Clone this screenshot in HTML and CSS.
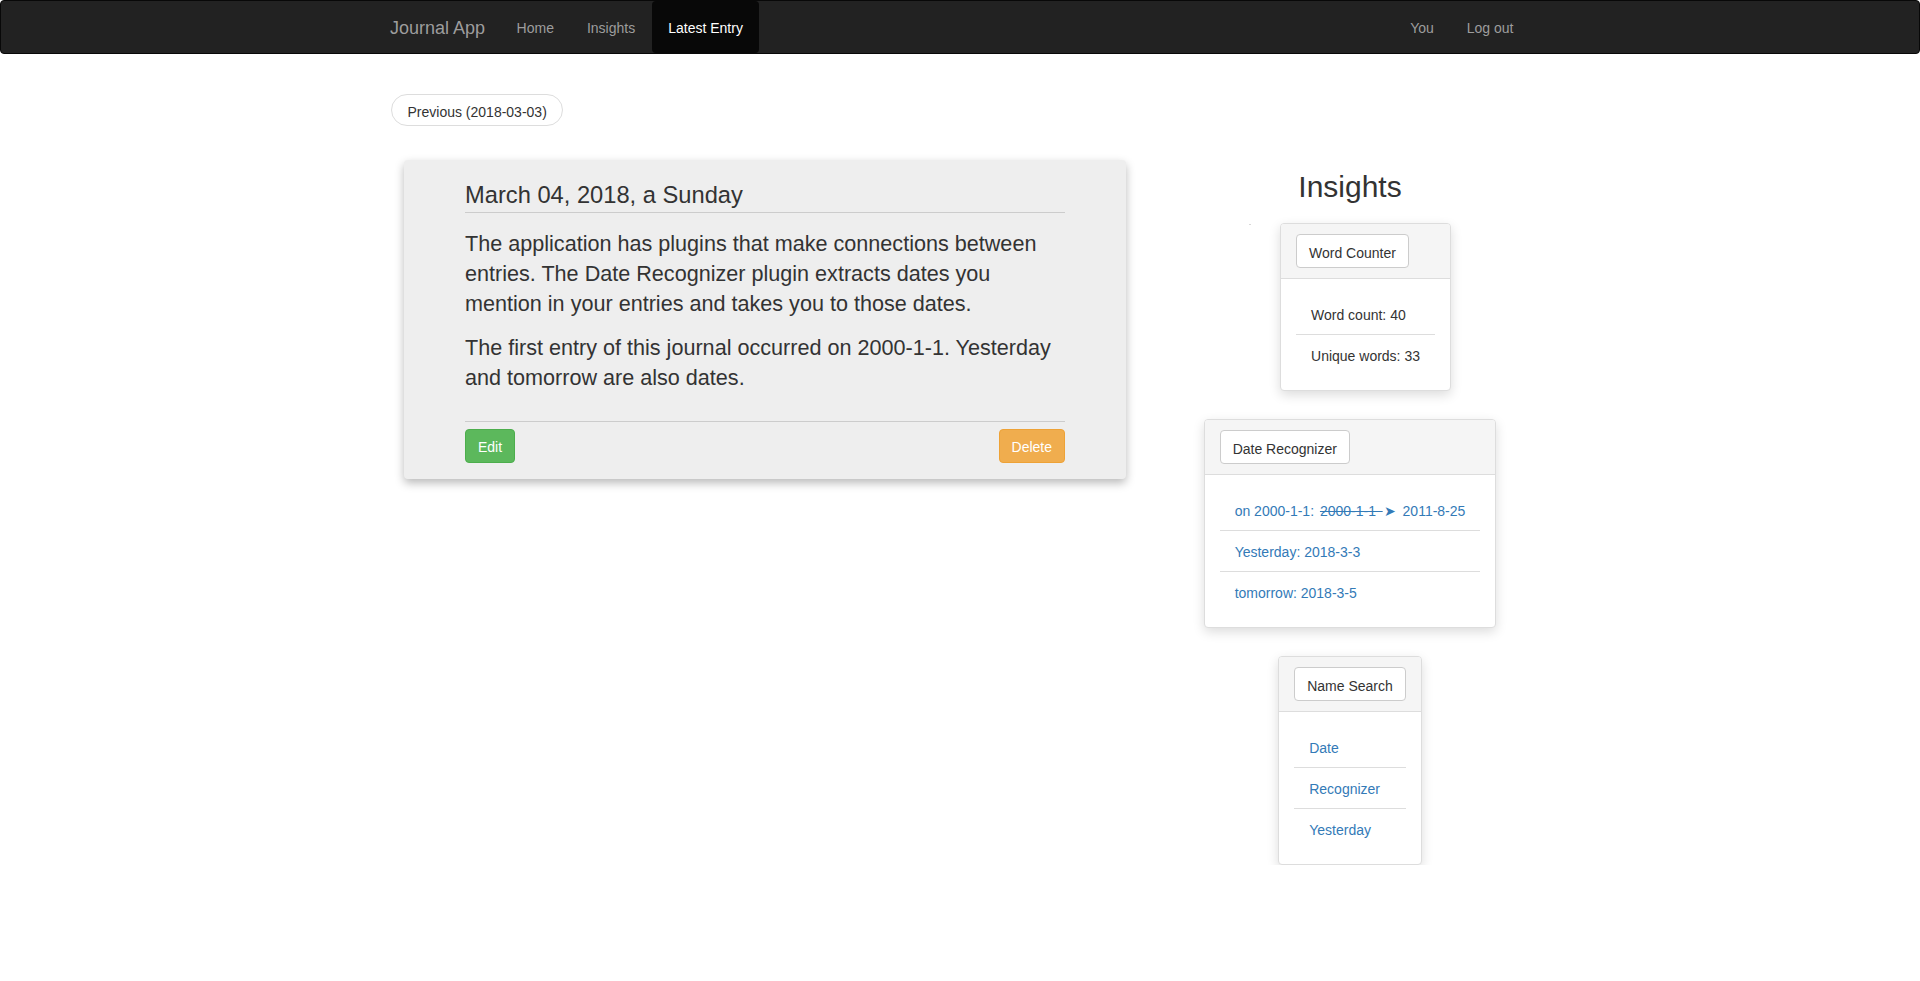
FILE: index.html
```html
<!DOCTYPE html>
<html lang="en">
<head>
<meta charset="utf-8">
<title>Journal App</title>
<link rel="stylesheet" href="styles.css">
</head>
<body>
<nav class="navbar">
  <div class="nav-inner">
    <a class="brand" href="#">Journal App</a>
    <a class="nav-link" href="#">Home</a>
    <a class="nav-link" href="#">Insights</a>
    <a class="nav-link active" href="#">Latest Entry</a>
    <div class="nav-right">
      <a class="nav-link" href="#">You</a>
      <a class="nav-link" href="#">Log out</a>
    </div>
  </div>
</nav>

<main class="container">
  <div class="pager"><a class="pager-btn" href="#">Previous (2018-03-03)</a></div>

  <div class="row">
    <section class="entry-col">
      <article class="entry-card">
        <h3 class="entry-title">March 04, 2018, a Sunday</h3>
        <p class="entry-text">The application has plugins that make connections between entries. The Date Recognizer plugin extracts dates you mention in your entries and takes you to those dates.</p>
        <p class="entry-text">The first entry of this journal occurred on 2000-1-1. Yesterday and tomorrow are also dates.</p>
        <div class="entry-footer">
          <a class="btn btn-card btn-success" href="#">Edit</a>
          <a class="btn btn-card btn-warning" href="#">Delete</a>
        </div>
      </article>
    </section>

    <aside class="insights-col">
      <h2 class="insights-title">Insights</h2>
      <div class="panels">
        <div class="panel-row">
          <span class="dot"></span>
          <div class="panel">
            <div class="panel-heading"><button class="btn btn-default">Word Counter</button></div>
            <div class="panel-body">
              <ul class="list">
                <li class="list-item">Word count: 40</li>
                <li class="list-item">Unique words: 33</li>
              </ul>
            </div>
          </div>
        </div>

        <div class="panel">
          <div class="panel-heading"><button class="btn btn-default">Date Recognizer</button></div>
          <div class="panel-body">
            <ul class="list">
              <li class="list-item"><a class="link" href="#">on 2000-1-1: <s class="old-date">2000-1-1&#8201; </s><span class="arrow">&#10148;</span> 2011-8-25</a></li>
              <li class="list-item"><a class="link" href="#">Yesterday: 2018-3-3</a></li>
              <li class="list-item"><a class="link" href="#">tomorrow: 2018-3-5</a></li>
            </ul>
          </div>
        </div>

        <div class="panel">
          <div class="panel-heading"><button class="btn btn-default">Name Search</button></div>
          <div class="panel-body">
            <ul class="list">
              <li class="list-item"><a class="link" href="#">Date</a></li>
              <li class="list-item"><a class="link" href="#">Recognizer</a></li>
              <li class="list-item"><a class="link" href="#">Yesterday</a></li>
            </ul>
          </div>
        </div>
      </div>
    </aside>
  </div>
</main>
</body>
</html>
```

FILE: styles.css
```css
* { box-sizing: border-box; }

html, body {
  margin: 0;
  padding: 0;
  background: #fff;
}

body {
  font-family: "Liberation Sans", Arial, Helvetica, sans-serif;
  font-size: 14px;
  line-height: 20px;
  color: #333;
}

a { text-decoration: none; }

/* Navbar */
.navbar {
  height: 54px;
  background: #222;
  border: 1px solid #080808;
  border-radius: 4px;
}

.nav-inner {
  width: 1170px;
  margin: 0 auto;
  display: flex;
  align-items: stretch;
  height: 52px;
}

.brand {
  font-size: 18px;
  line-height: 20px;
  padding: 17px 15px 15px;
  color: #9d9d9d;
}

.nav-link {
  padding: 17px 16.5px 15px;
  line-height: 20px;
  color: #9d9d9d;
}

.nav-link.active {
  color: #fff;
  background: #080808;
  border-radius: 4px;
}

.nav-right {
  margin-left: auto;
  margin-right: 15px;
  display: flex;
}

/* Page */
.container {
  width: 1170px;
  margin: 0 auto;
  padding: 0 15px;
}

.pager {
  margin-top: 40px;
  height: 32px;
}

.pager-btn {
  display: inline-block;
  margin-left: 1px;
  padding: 7px 15.5px 3px;
  border: 1px solid #ddd;
  border-radius: 16px;
  background: #fff;
  color: #333;
  line-height: 20px;
}

.row {
  display: flex;
  gap: 30px;
  margin-top: 34px;
}

.entry-col {
  width: 750px;
  flex: none;
}

.entry-card {
  margin: 0 14px;
  background: #eee;
  border-radius: 4px;
  padding: 22px 61px 16px;
  box-shadow: 0 4px 10px rgba(0, 0, 0, 0.28);
}

.entry-title {
  margin: 0 0 16px;
  font-size: 23.7px;
  line-height: 26px;
  font-weight: 400;
  padding-bottom: 4px;
  border-bottom: 1px solid #ccc;
  color: #333;
}

.entry-text {
  margin: 0 0 13px;
  font-size: 21.6px;
  line-height: 1.4;
}

.entry-footer {
  margin-top: 28px;
  border-top: 1px solid #ccc;
  padding-top: 7px;
  display: flex;
  justify-content: space-between;
}

.btn {
  display: inline-block;
  padding: 8px 12px 4px;
  font-family: inherit;
  font-size: 14px;
  line-height: 20px;
  border: 1px solid transparent;
  border-radius: 4px;
  cursor: pointer;
}

.btn-card {
  padding: 7px 12px 5px;
}

.btn-success {
  color: #fff;
  background: #5cb85c;
  border-color: #4cae4c;
}

.btn-warning {
  color: #fff;
  background: #f0ad4e;
  border-color: #eea236;
}

.btn-default {
  color: #333;
  background: #fff;
  border-color: #ccc;
}

/* Insights */
.insights-col {
  width: 360px;
  flex: none;
}

.insights-title {
  margin: 10px 0 20px;
  font-size: 30px;
  line-height: 33px;
  font-weight: 400;
  text-align: center;
  color: #333;
}

.panels {
  display: flex;
  flex-direction: column;
  align-items: center;
  gap: 28px;
}

.panel-row {
  display: flex;
  align-items: flex-start;
  gap: 29px;
}

.dot {
  width: 2px;
  height: 1px;
  margin-top: 1px;
  background: #d8d8d8;
}

.panel {
  background: #fff;
  border: 1px solid #ddd;
  border-radius: 4px;
  box-shadow: 0 4px 12px rgba(0, 0, 0, 0.14);
}

.panel-heading {
  background: #f5f5f5;
  padding: 10px 15px;
  border-bottom: 1px solid #ddd;
  border-radius: 3px 3px 0 0;
}

.panel-body {
  padding: 15px;
}

.list {
  list-style: none;
  margin: 0;
  padding: 0;
}

.list-item {
  padding: 11px 15px 9px;
  line-height: 20px;
  white-space: nowrap;
}

.list-item + .list-item {
  border-top: 1px solid #ddd;
}

.link {
  color: #337ab7;
}

.old-date {
  margin-left: 2px;
}

.arrow {
  margin: 0 3px 0 1px;
}
```
